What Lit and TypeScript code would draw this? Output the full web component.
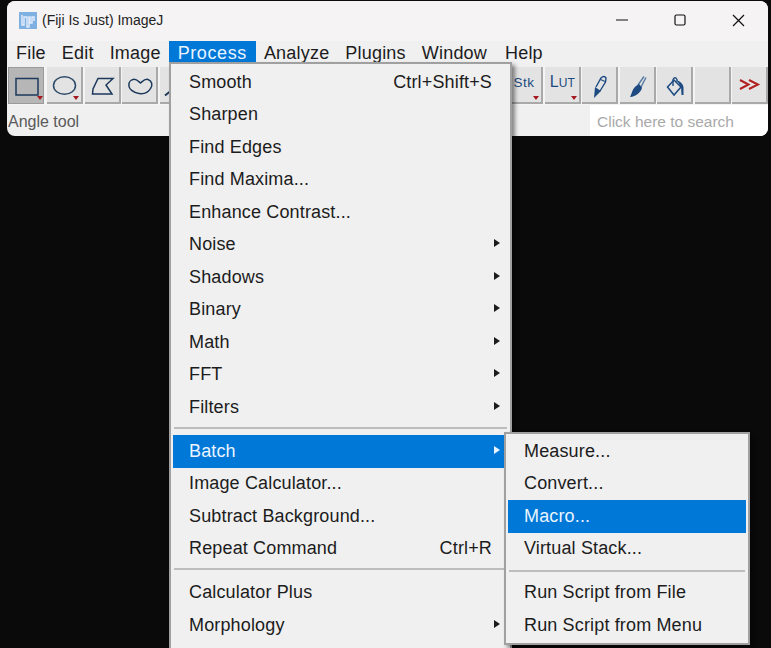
import { LitElement, html, css, svg } from 'lit';
import { customElement } from 'lit/decorators.js';

type Entry = { label?: string; shortcut?: string; sub?: boolean; active?: boolean; sep?: boolean };

const PROCESS: Entry[] = [
  { label: 'Smooth', shortcut: 'Ctrl+Shift+S' },
  { label: 'Sharpen' },
  { label: 'Find Edges' },
  { label: 'Find Maxima...' },
  { label: 'Enhance Contrast...' },
  { label: 'Noise', sub: true },
  { label: 'Shadows', sub: true },
  { label: 'Binary', sub: true },
  { label: 'Math', sub: true },
  { label: 'FFT', sub: true },
  { label: 'Filters', sub: true },
  { sep: true },
  { label: 'Batch', sub: true, active: true },
  { label: 'Image Calculator...' },
  { label: 'Subtract Background...' },
  { label: 'Repeat Command', shortcut: 'Ctrl+R' },
  { sep: true },
  { label: 'Calculator Plus' },
  { label: 'Morphology', sub: true },
];

const BATCH: Entry[] = [
  { label: 'Measure...' },
  { label: 'Convert...' },
  { label: 'Macro...', active: true },
  { label: 'Virtual Stack...' },
  { sep: true },
  { label: 'Run Script from File' },
  { label: 'Run Script from Menu' },
];

const MENUS = ['File', 'Edit', 'Image', 'Process', 'Analyze', 'Plugins', 'Window', 'Help'];

const tool = (body: unknown) => html`<svg class="tool-icon" viewBox="0 0 30 30" width="30" height="30">${body}</svg>`;

const ICONS = {
  rect: tool(svg`<rect x="5" y="7.5" width="22" height="16.5" fill="none" stroke="#1d3a5c" stroke-width="1.5"/>`),
  oval: tool(svg`<ellipse cx="15.5" cy="15.5" rx="11" ry="8.8" fill="none" stroke="#2c4a68" stroke-width="1.5"/>`),
  poly: tool(svg`<path d="M5.5 24 L6 19 L11 8.5 L26 8.5 L19 15 L25 24 Z" fill="none" stroke="#1d3a5c" stroke-width="1.5"/>`),
  free: tool(svg`<path d="M9 9.5 C12 8.5 14 11 16.5 13 C19 11 21 8.5 24 9.5 C28 11 29 15 26.5 18.5 C24 23 19 24 15 23.5 C10 23 4 19 5 14 C5 12 7 10 9 9.5 Z" fill="none" stroke="#1d3a5c" stroke-width="1.5"/>`),
  line: tool(svg`<path d="M3 25.5 L8 21.5" fill="none" stroke="#1d3a5c" stroke-width="2"/>`),
  pencil: tool(svg`<path d="M12 17 L17 8 Q20 5 22 8 L21.5 12 L16 21" fill="none" stroke="#1d4a80" stroke-width="1.4"/><path d="M10 28 L11 17 L17 21 Z" fill="#1d4a80"/><path d="M16.5 9.5 L21 11.5" stroke="#1d4a80" stroke-width="1.1"/>`),
  brush: tool(svg`<path d="M16 15 L22 6.5 M19 17 L24 7.5" stroke="#5b7ea6" stroke-width="1.5" fill="none"/><path d="M15.5 15 L17 14 L20 17.5 C19.5 22 14 26.5 8 27 C10 24 10 18 15.5 15 Z" fill="#1d4a80"/>`),
  fill: tool(svg`<path d="M8.5 17 L15 10 L22 17 L15 25 Z" fill="none" stroke="#1d4a80" stroke-width="1.5"/><path d="M14 16 L14 9.5 Q16 6 18 9.5 L18 12" fill="none" stroke="#1d4a80" stroke-width="1.4"/><path d="M18 10.5 C21 11 24 14 24.5 17 L24.5 25 L22.5 25 L22 17 Z" fill="#1d4a80"/>`),
  more: tool(svg`<path d="M6 10 L14.5 14.5 L6 19 M15 10 L24 14.5 L15 19" fill="none" stroke="#b32020" stroke-width="2"/>`),
};

@customElement('app-root')
export class AppRoot extends LitElement {
  static styles = css`
    :host {
      display: block;
      position: relative;
      width: 771px;
      height: 648px;
      overflow: hidden;
      background: #0a0a0a;
      font-family: 'Liberation Sans', Arial, sans-serif;
      color: #1c1c1c;
    }

    .window {
      margin: 1px 3px 0 7px;
      height: 135px;
      border-radius: 8px;
      overflow: hidden;
      background: #f0f0f0;
      display: flex;
      flex-direction: column;
    }

    .titlebar {
      height: 38px;
      flex: none;
      background: #f5f3f3;
      display: flex;
      align-items: center;
      padding: 0 0 2px 12px;
      font-size: 14px;
      color: #222;
    }

    .titlebar__logo {
      margin-right: 5px;
    }

    .titlebar__controls {
      margin-left: auto;
      display: flex;
      align-items: center;
      gap: 46px;
      padding-right: 23px;
    }

    .menubar {
      height: 26px;
      flex: none;
      display: flex;
      padding-left: 1px;
      font-size: 18px;
      letter-spacing: 0.2px;
      background: #f0f0f0;
    }

    .menubar__item {
      height: 23px;
      line-height: 24px;
      padding: 0 8px;
    }

    .menubar__item:last-child {
      margin-left: 2px;
    }

    .menubar__item--open {
      padding: 0 9px;
      letter-spacing: 0.6px;
      background: #0078d7;
      color: #eaf4ff;
    }

    .toolbar {
      height: 38px;
      flex: none;
      display: flex;
      padding-left: 1px;
      background: #f4f4f4;
    }

    .toolbar__group {
      display: flex;
      gap: 1.5px;
    }

    .toolbar__group--right {
      margin-left: auto;
    }

    .tool {
      position: relative;
      box-sizing: border-box;
      width: 36px;
      height: 37px;
      background: #e3e3e3;
      border-right: 2px solid #a9a9a9;
      border-bottom: 2px solid #a9a9a9;
      display: flex;
      align-items: center;
      justify-content: center;
      color: #1d4a80;
      font-size: 13px;
    }

    .tool--on {
      margin-right: 1.5px;
      background: #b6b6b6;
      border: 1px solid #9a9a9a;
    }

    .tool--drop::after {
      content: '';
      position: absolute;
      right: 2px;
      bottom: 2px;
      border-left: 3.5px solid transparent;
      border-right: 3.5px solid transparent;
      border-top: 4px solid #a5181f;
    }

    .tool--on::after {
      right: 0;
      bottom: 3px;
    }

    .tool-icon {
      display: block;
    }

    .tool__lut {
      font-size: 16px;
      margin-top: -5px;
      margin-left: 2px;
    }

    .tool__lut small {
      font-size: 12px;
      letter-spacing: 0.2px;
    }

    .tool__stk {
      font-size: 13.5px;
      letter-spacing: 0.5px;
      margin-top: -5px;
    }

    .statusbar {
      flex: 1;
      display: flex;
      font-size: 16px;
      color: #5a5a5a;
    }

    .statusbar__text {
      flex: 1;
      padding: 8px 0 0 1px;
    }

    .statusbar__search {
      width: 171px;
      padding: 8px 0 0 7px;
      background: #fff;
      color: #a9a9a9;
      font-size: 15.5px;
    }

    .menu {
      position: absolute;
      box-sizing: border-box;
      background: #f0f0f0;
      border: 2px solid #a0a0a0;
      box-shadow: 3px 3px 4px rgba(0, 0, 0, 0.45);
      font-size: 18px;
      letter-spacing: 0.15px;
      padding: 1px 2px;
    }

    .menu--process {
      left: 169px;
      top: 62px;
      width: 343px;
      height: 620px;
      padding-top: 2px;
    }

    .menu--batch {
      left: 504px;
      top: 432px;
      width: 246px;
      height: 213px;
    }

    .menu__item {
      height: 32.5px;
      display: flex;
      align-items: center;
      padding: 0 16px;
    }

    .menu__item--active {
      background: #0078d7;
      color: #eaf4ff;
    }

    .menu__shortcut {
      margin-left: auto;
    }

    .menu__arrow {
      margin-left: auto;
      margin-right: -8px;
      margin-top: -3px;
      border-top: 4.5px solid transparent;
      border-bottom: 4.5px solid transparent;
      border-left: 6px solid currentColor;
    }

    .menu__sep {
      height: 2px;
      margin: 3px 1px 6.5px;
      background: #bdbdbd;
    }

    .menu__sep ~ .menu__sep {
      margin: 2.5px 1px 6.8px;
    }

    .menu--batch .menu__sep {
      margin: 4.5px 1px 4.8px;
    }
  `;

  renderMenu(entries: Entry[], variant: string) {
    return html`
      <div class="menu menu--${variant}">
        ${entries.map((e) =>
          e.sep
            ? html`<div class="menu__sep"></div>`
            : html`
                <div class="menu__item ${e.active ? 'menu__item--active' : ''}">
                  <span>${e.label}</span>
                  ${e.shortcut ? html`<span class="menu__shortcut">${e.shortcut}</span>` : ''}
                  ${e.sub ? html`<span class="menu__arrow"></span>` : ''}
                </div>
              `
        )}
      </div>
    `;
  }

  render() {
    return html`
      <div class="window">
        <div class="titlebar">
          <svg class="titlebar__logo" width="18" height="17" viewBox="0 0 18 17">
            <rect width="18" height="17" fill="#7fb0e2" />
            <path d="M3 3V13H5V5H8V15H10V5H11V11H13V5H15V9" fill="none" stroke="#dfeafa" stroke-width="1.5" />
          </svg>
          <span>(Fiji Is Just) ImageJ</span>
          <div class="titlebar__controls">
            <svg width="12" height="12" viewBox="0 0 12 12"><path d="M0 6H12" stroke="#111" stroke-width="1.2" /></svg>
            <svg width="12" height="12" viewBox="0 0 12 12"><rect x="1" y="1" width="10" height="10" rx="1.5" fill="none" stroke="#111" stroke-width="1.2" /></svg>
            <svg width="13" height="13" viewBox="0 0 13 13"><path d="M1 1L12 12M12 1L1 12" stroke="#111" stroke-width="1.2" /></svg>
          </div>
        </div>
        <div class="menubar">
          ${MENUS.map((m) => html`<div class="menubar__item ${m === 'Process' ? 'menubar__item--open' : ''}">${m}</div>`)}
        </div>
        <div class="toolbar">
          <div class="toolbar__group">
            <div class="tool tool--on tool--drop">${ICONS.rect}</div>
            <div class="tool tool--drop">${ICONS.oval}</div>
            <div class="tool">${ICONS.poly}</div>
            <div class="tool">${ICONS.free}</div>
            <div class="tool">${ICONS.line}</div>
          </div>
          <div class="toolbar__group toolbar__group--right">
            <div class="tool tool--drop"><span class="tool__stk">Stk</span></div>
            <div class="tool tool--drop"><span class="tool__lut">L<small>UT</small></span></div>
            <div class="tool">${ICONS.pencil}</div>
            <div class="tool">${ICONS.brush}</div>
            <div class="tool">${ICONS.fill}</div>
            <div class="tool"></div>
            <div class="tool">${ICONS.more}</div>
          </div>
        </div>
        <div class="statusbar">
          <div class="statusbar__text">Angle tool</div>
          <div class="statusbar__search">Click here to search</div>
        </div>
      </div>
      ${this.renderMenu(PROCESS, 'process')} ${this.renderMenu(BATCH, 'batch')}
    `;
  }
}
